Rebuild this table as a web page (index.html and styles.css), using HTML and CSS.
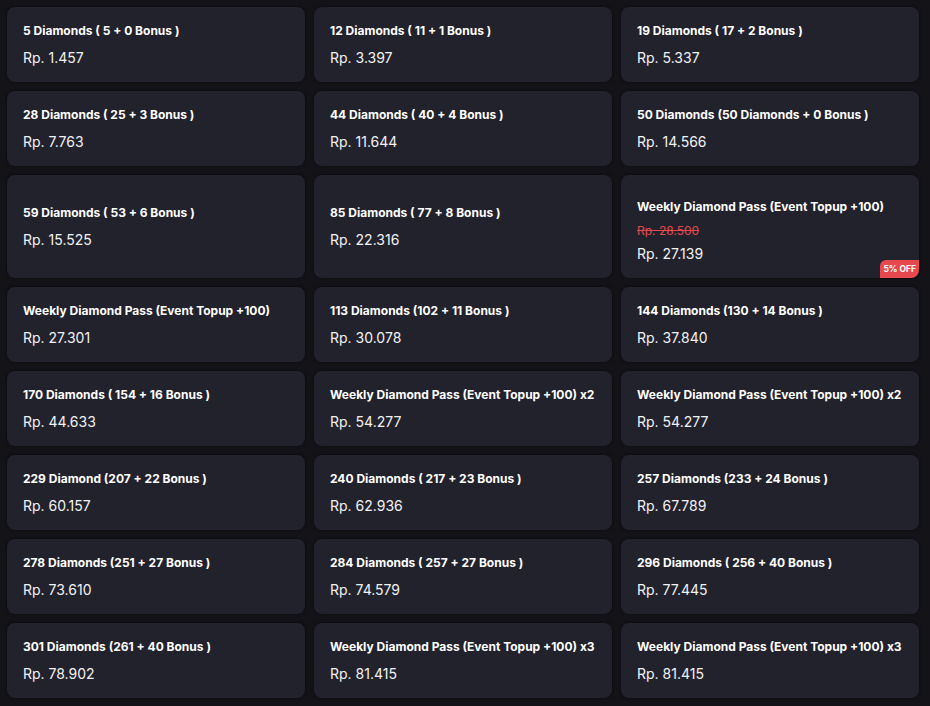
FILE: index.html
```html
<!DOCTYPE html>
<html lang="id">
<head>
<meta charset="utf-8">
<title>Diamonds</title>
<link rel="stylesheet" href="styles.css">
</head>
<body>
<div class="grid">
  <div class="card"><div class="title">5 Diamonds ( 5 + 0 Bonus )</div><div class="price">Rp. 1.457</div></div>
  <div class="card"><div class="title">12 Diamonds ( 11 + 1 Bonus )</div><div class="price">Rp. 3.397</div></div>
  <div class="card"><div class="title">19 Diamonds ( 17 + 2 Bonus )</div><div class="price">Rp. 5.337</div></div>

  <div class="card"><div class="title">28 Diamonds ( 25 + 3 Bonus )</div><div class="price">Rp. 7.763</div></div>
  <div class="card"><div class="title">44 Diamonds ( 40 + 4 Bonus )</div><div class="price">Rp. 11.644</div></div>
  <div class="card"><div class="title">50 Diamonds (50 Diamonds + 0 Bonus )</div><div class="price">Rp. 14.566</div></div>

  <div class="card"><div class="title">59 Diamonds ( 53 + 6 Bonus )</div><div class="price">Rp. 15.525</div></div>
  <div class="card"><div class="title">85 Diamonds ( 77 + 8 Bonus )</div><div class="price">Rp. 22.316</div></div>
  <div class="card card-promo">
    <div class="title">Weekly Diamond Pass (Event Topup +100)</div>
    <div class="old-price">Rp. 28.500</div>
    <div class="price">Rp. 27.139</div>
    <span class="badge">5% OFF</span>
  </div>

  <div class="card"><div class="title">Weekly Diamond Pass (Event Topup +100)</div><div class="price">Rp. 27.301</div></div>
  <div class="card"><div class="title">113 Diamonds (102 + 11 Bonus )</div><div class="price">Rp. 30.078</div></div>
  <div class="card"><div class="title">144 Diamonds (130 + 14 Bonus )</div><div class="price">Rp. 37.840</div></div>

  <div class="card"><div class="title">170 Diamonds ( 154 + 16 Bonus )</div><div class="price">Rp. 44.633</div></div>
  <div class="card"><div class="title">Weekly Diamond Pass (Event Topup +100) x2</div><div class="price">Rp. 54.277</div></div>
  <div class="card"><div class="title">Weekly Diamond Pass (Event Topup +100) x2</div><div class="price">Rp. 54.277</div></div>

  <div class="card"><div class="title">229 Diamond (207 + 22 Bonus )</div><div class="price">Rp. 60.157</div></div>
  <div class="card"><div class="title">240 Diamonds ( 217 + 23 Bonus )</div><div class="price">Rp. 62.936</div></div>
  <div class="card"><div class="title">257 Diamonds (233 + 24 Bonus )</div><div class="price">Rp. 67.789</div></div>

  <div class="card"><div class="title">278 Diamonds (251 + 27 Bonus )</div><div class="price">Rp. 73.610</div></div>
  <div class="card"><div class="title">284 Diamonds ( 257 + 27 Bonus )</div><div class="price">Rp. 74.579</div></div>
  <div class="card"><div class="title">296 Diamonds ( 256 + 40 Bonus )</div><div class="price">Rp. 77.445</div></div>

  <div class="card"><div class="title">301 Diamonds (261 + 40 Bonus )</div><div class="price">Rp. 78.902</div></div>
  <div class="card"><div class="title">Weekly Diamond Pass (Event Topup +100) x3</div><div class="price">Rp. 81.415</div></div>
  <div class="card"><div class="title">Weekly Diamond Pass (Event Topup +100) x3</div><div class="price">Rp. 81.415</div></div>
</div>
</body>
</html>
```
FILE: styles.css
```css
html, body {
  margin: 0;
  padding: 0;
  background: #131318;
}
body {
  font-family: Inter, "Noto Sans", sans-serif;
  color: #ffffff;
  width: 930px;
  height: 706px;
  overflow: hidden;
}
.grid {
  display: grid;
  grid-template-columns: repeat(3, 298px);
  column-gap: 9px;
  row-gap: 9px;
  padding: 7px;
}
.card {
  position: relative;
  background: #22222c;
  border-radius: 8px;
  padding: 14px 16px 13px;
  min-height: 75px;
  box-sizing: border-box;
  display: flex;
  flex-direction: column;
  justify-content: center;
  box-shadow: 0 0 3px rgba(0, 0, 0, 0.5);
}
.title {
  font-size: 12px;
  font-weight: 700;
  line-height: 20px;
  white-space: nowrap;
}
.price {
  font-size: 14px;
  font-weight: 400;
  line-height: 22px;
  margin-top: 6px;
  color: #f2f2f5;
}
.card-promo {
  padding-top: 22px;
  padding-bottom: 13px;
  min-height: 103px;
  justify-content: flex-start;
}
.card-promo .title {
  margin-bottom: 6px;
}
.old-price {
  font-size: 12px;
  line-height: 16px;
  color: #e5484d;
  text-decoration: line-through;
}
.card-promo .price {
  margin-top: 4px;
}
.badge {
  position: absolute;
  right: 0;
  bottom: 0;
  background: #e5484d;
  color: #fff;
  font-size: 8.5px;
  font-weight: 700;
  line-height: 18px;
  padding: 0 3px;
  border-radius: 6px 0 8px 0;
}
```
